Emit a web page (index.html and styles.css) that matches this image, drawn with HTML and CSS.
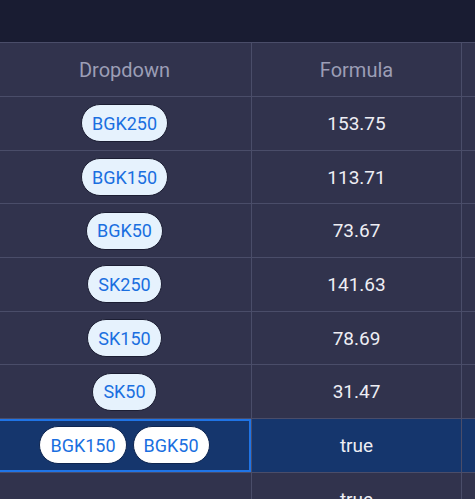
FILE: index.html
```html
<!DOCTYPE html>
<html>
<head>
<meta charset="utf-8">
<link rel="stylesheet" href="styles.css">
</head>
<body>
<div class="topbar"></div>
<div class="viewport">
  <div class="grid">
    <div class="cell head">Dropdown</div>
    <div class="cell head">Formula</div>
    <div class="cell head"></div>

    <div class="cell"><span class="chip">BGK250</span></div>
    <div class="cell">153.75</div>
    <div class="cell"></div>

    <div class="cell"><span class="chip">BGK150</span></div>
    <div class="cell">113.71</div>
    <div class="cell"></div>

    <div class="cell"><span class="chip">BGK50</span></div>
    <div class="cell">73.67</div>
    <div class="cell"></div>

    <div class="cell"><span class="chip">SK250</span></div>
    <div class="cell">141.63</div>
    <div class="cell"></div>

    <div class="cell"><span class="chip">SK150</span></div>
    <div class="cell">78.69</div>
    <div class="cell"></div>

    <div class="cell"><span class="chip">SK50</span></div>
    <div class="cell">31.47</div>
    <div class="cell"></div>

    <div class="cell sel active"><span class="chip white">BGK150</span><span class="chip white">BGK50</span></div>
    <div class="cell sel">true</div>
    <div class="cell sel"></div>

    <div class="cell"></div>
    <div class="cell">true</div>
    <div class="cell"></div>
  </div>
</div>
</body>
</html>
```

FILE: styles.css
```css
html, body {
  margin: 0;
  padding: 0;
  background: #31334d;
  overflow: hidden;
}
body {
  width: 475px;
  height: 499px;
  font-family: Roboto, "Noto Sans", sans-serif;
}
.topbar {
  height: 42px;
  background: #191c32;
}
.viewport {
  height: 457px;
  overflow: hidden;
}
.grid {
  display: grid;
  grid-template-columns: 254px 210px 200px;
  grid-template-rows: 54px;
  grid-auto-rows: 53.7px;
  margin-left: -2px;
  width: 664px;
  border-top: 1px solid #4a4d69;
}
.cell {
  box-sizing: border-box;
  border-right: 1px solid #4a4d69;
  border-bottom: 1px solid #4a4d69;
  background: #31334d;
  color: #eeeef4;
  font-size: 19px;
  display: flex;
  align-items: center;
  justify-content: center;
  gap: 6px;
  position: relative;
}
.head {
  color: #9c9eb6;
  font-size: 20px;
}
.sel {
  background: #15366d;
}
.active {
  box-shadow: inset 0 0 0 2px #1f74e6;
}
.chip {
  display: inline-flex;
  align-items: center;
  height: 36px;
  padding: 0 10px;
  border-radius: 19px;
  background: #e6f2fd;
  color: #1a6fe0;
  font-size: 18px;
  border: 1px solid #1c1e33;
}
.chip.white {
  background: #ffffff;
  border-color: #0f2650;
}
```
